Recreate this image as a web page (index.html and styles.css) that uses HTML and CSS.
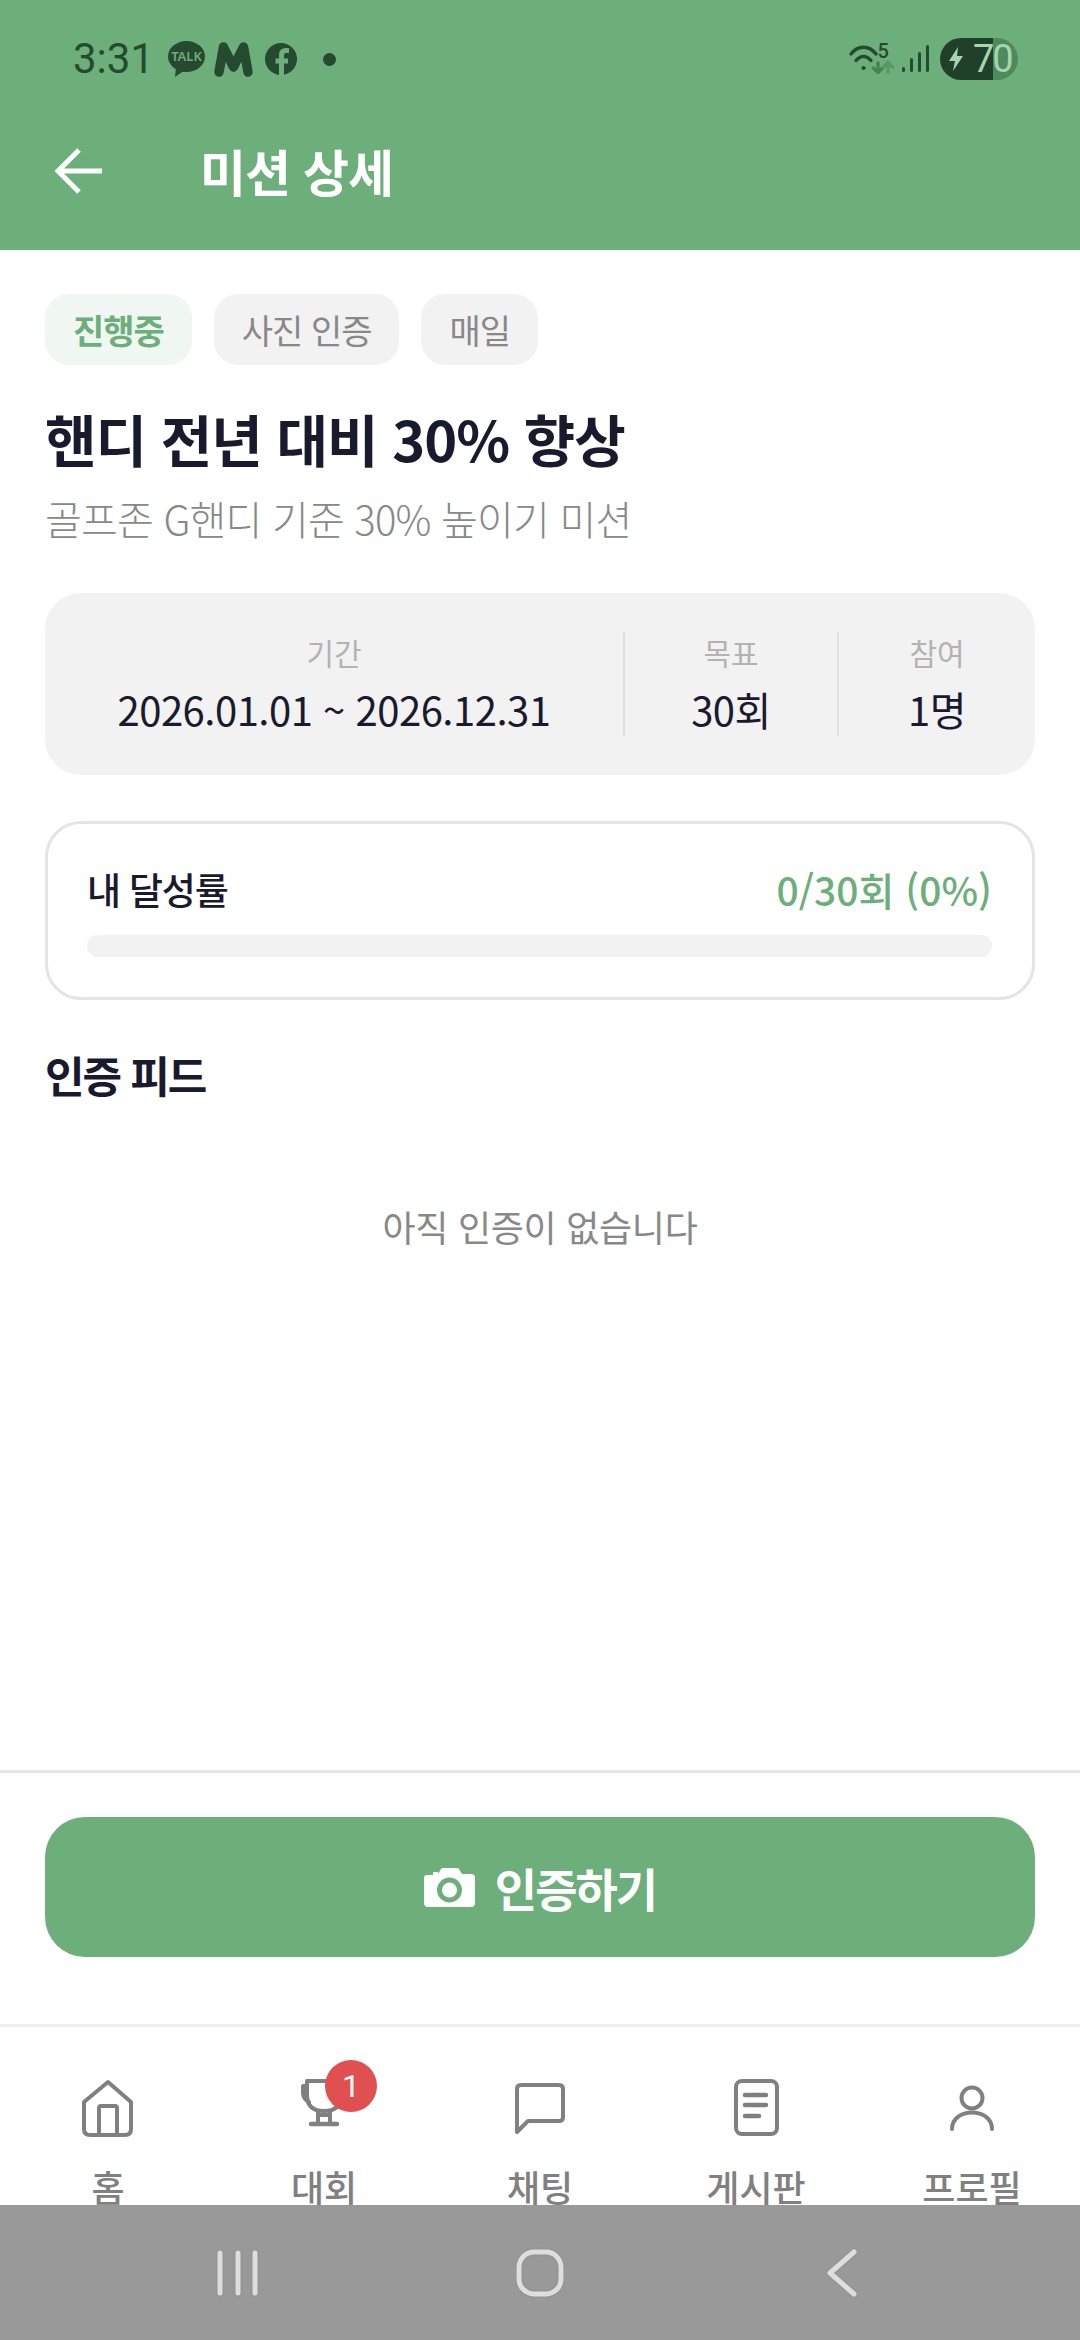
FILE: index.html
```html
<!DOCTYPE html>
<html lang="ko">
<head>
    <meta charset="utf-8">
    <title>미션 상세</title>
    <link rel="stylesheet" href="styles.css">
</head>
<body>
    <div class="screen">
        <header class="appbar">
            <div class="status-row">
                <div class="status-left">
                    <span class="clock">3:31</span>
                    <svg class="kakao" width="37" height="36" viewBox="0 0 37 36">
                        <ellipse cx="18.5" cy="15.5" rx="18.5" ry="15.5" fill="#264a2f"/>
                        <path d="M8 26 L7 36 L17 29 Z" fill="#264a2f"/>
                        <text x="18.5" y="20" text-anchor="middle" class="kakao-text">TALK</text>
                    </svg>
                    <svg class="mail-m" width="39" height="36" viewBox="0 0 39 36" fill="none" stroke="#264a2f" stroke-width="9.500" stroke-linecap="round" stroke-linejoin="round">
                        <path d="M5 31 L9.500 6 L19.500 26 L29.500 6 L34 31"/>
                    </svg>
                    <svg class="fb" width="32" height="32" viewBox="0 0 32 32">
                        <circle cx="16" cy="16" r="16" fill="#264a2f"/>
                        <path d="M16.500 32 V12 Q16.500 7.500 21 7.500 H24 M10.500 18 H23" fill="none" stroke="#6daf7b" stroke-width="5"/>
                    </svg>
                    <span class="dot"></span>
                </div>
                <div class="status-right">
                    <div class="wifi">
                        <svg width="48" height="30" viewBox="0 0 48 30" fill="none" stroke="#264a2f" stroke-width="3.4" stroke-linecap="round">
                            <path d="M2 10 C9 1 20 1 27 10"/>
                            <path d="M7 16.500 C11.500 11 17.500 11 22 16.500"/>
                            <circle cx="14.500" cy="24" r="1.600" fill="#264a2f" stroke-width="1"/>
                            <path d="M29 19 V28 M24.500 24 L29 28.500 L33.500 24" stroke="#4a8257"/>
                            <path d="M39 28 V19 M34.500 23 L39 18.500 L43.500 23" stroke="#5b9668"/>
                        </svg>
                        <span class="wifi-num">5</span>
                    </div>
                    <div class="signal">
                        <span class="bar-a"></span>
                        <span class="bar-b"></span>
                        <span class="bar-c"></span>
                        <span class="bar-d"></span>
                    </div>
                    <div class="battery">
                        <svg width="16" height="24" viewBox="0 0 16 24">
                            <path d="M10 0 L1 14 H7 L5 24 L15 9 H9 Z" fill="#a6d4b0"/>
                        </svg>
                        <span class="battery-num">70</span>
                    </div>
                </div>
            </div>
            <div class="title-row">
                <svg class="back" width="48" height="46" viewBox="0 0 48 46" fill="none" stroke="#fff" stroke-width="5">
                    <path d="M47 23 H4 M24 2 L3 23 L24 44"/>
                </svg>
                <h1>미션 상세</h1>
            </div>
        </header>

        <main class="content">
            <div class="chips">
                <span class="chip chip-active">진행중</span>
                <span class="chip">사진 인증</span>
                <span class="chip">매일</span>
            </div>
            <h2 class="mission-title">핸디 전년 대비 30% 향상</h2>
            <p class="mission-sub">골프존 G핸디 기준 30% 높이기 미션</p>

            <div class="info-card">
                <div class="info-col">
                    <span class="info-label">기간</span>
                    <span class="info-value">2026.01.01 ~ 2026.12.31</span>
                </div>
                <div class="info-col info-col-line">
                    <span class="info-label">목표</span>
                    <span class="info-value">30회</span>
                </div>
                <div class="info-col info-col-line">
                    <span class="info-label">참여</span>
                    <span class="info-value">1명</span>
                </div>
            </div>

            <div class="progress-card">
                <div class="progress-head">
                    <span class="progress-label">내 달성률</span>
                    <span class="progress-value">0/30회 (0%)</span>
                </div>
                <div class="progress-track"></div>
            </div>

            <h3 class="feed-title">인증 피드</h3>
            <p class="feed-empty">아직 인증이 없습니다</p>
        </main>

        <div class="action-bar">
            <button class="action-button">
                <svg width="51" height="39" viewBox="0 0 51 39">
                    <path fill-rule="evenodd" fill="#fff" d="M3 7 H9 V4 H14 V6 L17 1 Q17.500 0 19 0 H33 Q34.500 0 35 1 L38 6 H47 Q51 6 51 10 V35 Q51 39 47 39 H4 Q0 39 0 35 V10 Q0 7 3 7 Z M25.500 9.500 A12.500 12.500 0 1 0 25.501 34.500 A12.500 12.500 0 1 0 25.500 9.500 Z"/>
                    <circle cx="25.500" cy="22" r="7.500" fill="#fff"/>
                </svg>
                <span>인증하기</span>
            </button>
        </div>

        <nav class="tabbar">
            <div class="tab">
                <svg class="tab-icon" width="56" height="62" viewBox="0 0 56 62" fill="none" stroke="#808080" stroke-width="4" stroke-linejoin="round">
                    <path d="M28 5 L51 25 V52 Q51 58 45 58 H10 Q4 58 4 52 V25 Z"/>
                    <path d="M19 58 V31 Q19 29 21 29 H35 Q37 29 37 31 V58"/>
                </svg>
                <span>홈</span>
            </div>
            <div class="tab">
                <div class="trophy-wrap">
                    <svg class="tab-icon" width="56" height="62" viewBox="0 0 56 62" fill="none" stroke="#808080" stroke-width="4" stroke-linecap="round" stroke-linejoin="round">
                        <path d="M11 4 H45 V18 Q45 34 28 34 Q11 34 11 18 Z"/>
                        <path d="M11 9 H7 V16 Q7 22 13 25"/>
                        <path d="M22 34 V47 M34 34 V47 M22 38 H34"/>
                        <path d="M15 47 H41" stroke-width="4.500"/>
                    </svg>
                    <span class="badge">1</span>
                </div>
                <span>대회</span>
            </div>
            <div class="tab">
                <svg class="tab-icon" width="56" height="62" viewBox="0 0 56 62" fill="none" stroke="#808080" stroke-width="4" stroke-linejoin="round">
                    <path d="M5 55 V12 Q5 8 9 8 H47 Q51 8 51 12 V40 Q51 44 47 44 H16 Z"/>
                </svg>
                <span>채팅</span>
            </div>
            <div class="tab">
                <svg class="tab-icon" width="56" height="62" viewBox="0 0 56 62" fill="none" stroke="#808080" stroke-width="4" stroke-linecap="round">
                    <rect x="8" y="4" width="41" height="53" rx="6"/>
                    <path d="M17 18 H38 M17 28 H38 M17 39 H31" stroke-width="4.500"/>
                </svg>
                <span>게시판</span>
            </div>
            <div class="tab">
                <svg class="tab-icon" width="56" height="62" viewBox="0 0 56 62" fill="none" stroke="#808080" stroke-width="4" stroke-linecap="round">
                    <circle cx="28" cy="21" r="10.500"/>
                    <path d="M8 52 C8 30 48 30 48 52"/>
                </svg>
                <span>프로필</span>
            </div>
        </nav>

        <div class="system-nav">
            <svg class="sys-icon" width="42" height="46" viewBox="0 0 42 46" fill="none" stroke="#dedede" stroke-width="5" stroke-linecap="round">
                <path d="M3 3 V43 M21 3 V43 M38 3 V43"/>
            </svg>
            <svg class="sys-icon" width="48" height="48" viewBox="0 0 48 48" fill="none" stroke="#dedede" stroke-width="5">
                <rect x="3" y="3" width="42" height="42" rx="15"/>
            </svg>
            <svg class="sys-icon" width="32" height="48" viewBox="0 0 32 48" fill="none" stroke="#dedede" stroke-width="5" stroke-linecap="round" stroke-linejoin="round">
                <path d="M28 3 L4 24 L28 45"/>
            </svg>
        </div>
    </div>
</body>
</html>
```

FILE: styles.css
```css
* {
    box-sizing: border-box;
}
body {
    margin: 0;
    font-family: "Noto Sans CJK KR", "Noto Sans", sans-serif;
    background-color: white;
}
h1, h2, h3, p {
    margin: 0;
}
.screen {
    width: 1080px;
    height: 2340px;
    display: flex;
    flex-direction: column;
    overflow: hidden;
}

/* top green area */
.appbar {
    height: 250px;
    background-color: #6daf7b;
    flex-shrink: 0;
}
.status-row {
    height: 118px;
    display: flex;
    align-items: center;
    justify-content: space-between;
    padding: 0 62px 0 73px;
}
.status-left {
    display: flex;
    align-items: center;
}
.clock {
    font-family: Roboto, sans-serif;
    font-size: 42px;
    line-height: 48px;
    color: #264a2f;
    width: 95px;
}
.kakao-text {
    font-family: "Noto Sans", sans-serif;
    font-size: 13px;
    font-weight: 600;
    fill: #6daf7b;
}
.mail-m {
    margin-left: 9px;
}
.fb {
    margin-left: 12px;
}
.dot {
    width: 13px;
    height: 13px;
    margin-left: 26px;
    border-radius: 50%;
    background-color: #264a2f;
}
.status-right {
    display: flex;
    align-items: center;
}
.wifi {
    position: relative;
    width: 48px;
    height: 30px;
    margin-right: 5px;
}
.wifi-num {
    position: absolute;
    left: 29px;
    top: -3px;
    font-family: Roboto, sans-serif;
    font-size: 20px;
    font-weight: 500;
    line-height: 20px;
    color: #264a2f;
}
.signal {
    display: flex;
    align-items: flex-end;
    gap: 4.500px;
    height: 28px;
    margin-bottom: 2px;
}
.signal span {
    width: 3.500px;
    border-radius: 2px;
    background-color: #264a2f;
}
.bar-a { height: 5px; }
.bar-b { height: 14px; }
.bar-c { height: 20px; }
.bar-d { height: 27px; }
.battery {
    width: 78px;
    height: 42px;
    margin-left: 11px;
    padding-left: 8px;
    display: flex;
    align-items: center;
    gap: 9px;
    border-radius: 21px;
    background: linear-gradient(to right, #20402a 68%, #4f8a5c 68%);
}
.battery-num {
    font-family: Roboto, sans-serif;
    font-size: 38px;
    line-height: 42px;
    letter-spacing: -2px;
    color: #a6d4b0;
}
.title-row {
    height: 106px;
    display: flex;
    align-items: center;
    padding-left: 55px;
}
.title-row h1 {
    margin-left: 97px;
    font-size: 50px;
    font-weight: 700;
    line-height: 60px;
    letter-spacing: -1px;
    color: white;
    position: relative;
    top: -1px;
}

/* page content */
.content {
    flex: 1;
    padding: 44px 45px 0;
}
.chips {
    display: flex;
    gap: 22px;
}
.chip {
    height: 71px;
    padding: 0 28px;
    border-radius: 24px;
    background-color: #f2f2f2;
    color: #888888;
    font-size: 34px;
    letter-spacing: -1px;
    line-height: 71px;
}
.chip-active {
    background-color: #f0f7f2;
    color: #6daf7b;
    font-weight: 700;
}
.mission-title {
    margin-top: 42px;
    font-size: 56px;
    font-weight: 700;
    line-height: 62px;
    letter-spacing: -1px;
    color: #1a1a2e;
}
.mission-sub {
    margin-top: 21px;
    font-size: 40px;
    font-weight: 300;
    line-height: 56px;
    letter-spacing: -0.800px;
    color: #888888;
}
.info-card {
    margin-top: 47px;
    height: 182px;
    padding: 39px 0;
    display: grid;
    grid-template-columns: 578px 214px 1fr;
    border-radius: 36px;
    background-color: #f2f2f2;
}
.info-col {
    display: flex;
    flex-direction: column;
    align-items: center;
}
.info-col-line {
    border-left: 2px solid #e0e0e0;
}
.info-label {
    font-size: 30px;
    line-height: 44px;
    color: #b3b3b3;
    margin-top: -2px;
}
.info-value {
    margin-top: 13px;
    font-size: 40px;
    line-height: 44px;
    letter-spacing: -0.500px;
    color: #1a1a2e;
}
.progress-card {
    margin-top: 46px;
    height: 179px;
    padding: 0 40px 0 39px;
    border: 3px solid #e4e4e4;
    border-radius: 36px;
}
.progress-head {
    height: 111px;
    padding-top: 18px;
    display: flex;
    align-items: center;
    justify-content: space-between;
}
.progress-label {
    font-size: 37px;
    font-weight: 500;
    letter-spacing: -1.200px;
    color: #1a1a2e;
}
.progress-value {
    font-size: 39px;
    font-weight: 500;
    color: #6daf7b;
}
.progress-track {
    height: 22px;
    border-radius: 11px;
    background-color: #f2f2f2;
}
.feed-title {
    margin-top: 44px;
    font-size: 43px;
    font-weight: 700;
    line-height: 60px;
    letter-spacing: -2px;
    color: #1a1a2e;
}
.feed-empty {
    margin-top: 94px;
    font-size: 36px;
    line-height: 56px;
    letter-spacing: -0.300px;
    text-align: center;
    color: #888888;
}

/* button above tabs */
.action-bar {
    height: 254px;
    flex-shrink: 0;
    padding: 44px 45px 0;
    border-top: 3px solid #e6e6e6;
}
.action-button {
    width: 100%;
    height: 140px;
    display: flex;
    align-items: center;
    justify-content: center;
    gap: 20px;
    border: none;
    border-radius: 40px;
    background-color: #6daf7b;
    color: white;
    font-family: inherit;
    font-size: 46px;
    font-weight: 700;
    letter-spacing: -2px;
}

/* bottom tabs */
.tabbar {
    height: 181px;
    flex-shrink: 0;
    display: grid;
    grid-template-columns: repeat(5, 1fr);
    border-top: 3px solid #eeeeee;
}
.tab {
    padding-top: 50px;
    display: flex;
    flex-direction: column;
    align-items: center;
    color: #808080;
    font-size: 36px;
    font-weight: 500;
    line-height: 38px;
}
.tab-icon {
    display: block;
    margin-bottom: 28px;
}
.trophy-wrap {
    position: relative;
}
.badge {
    position: absolute;
    left: 29px;
    top: -17px;
    width: 52px;
    height: 52px;
    border-radius: 50%;
    background-color: #e05050;
    color: white;
    font-family: Roboto, sans-serif;
    font-size: 32px;
    font-weight: 400;
    line-height: 52px;
    text-align: center;
}
.system-nav {
    height: 135px;
    flex-shrink: 0;
    display: grid;
    grid-template-columns: 476px 1fr 476px;
    justify-items: center;
    align-items: center;
    background-color: #999999;
}
.sys-icon {
    filter: drop-shadow(0 0 1px #888888);
}
```
